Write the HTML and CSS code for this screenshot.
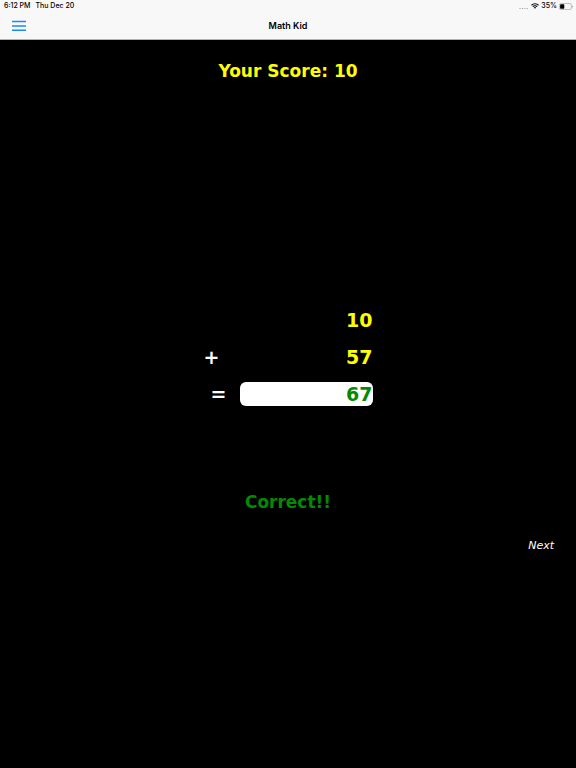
FILE: index.html
```html
<!DOCTYPE html>
<html lang="en">
<head>
<meta charset="utf-8">
<meta name="viewport" content="width=device-width, initial-scale=1">
<title>Math Kid</title>
<link rel="stylesheet" href="styles.css">
</head>
<body>
<header class="top">
  <div class="status">
    <span class="status-group"><span>6:12 PM</span><span>Thu Dec 20</span></span>
    <span class="status-group status-right">
      <svg class="dots" viewBox="0 0 9 3" aria-hidden="true"><g fill="#888"><circle cx="1" cy="1.5" r=".6"/><circle cx="3.4" cy="1.5" r=".6"/><circle cx="5.8" cy="1.5" r=".6"/><circle cx="8.2" cy="1.5" r=".6"/></g></svg>
      <svg class="wifi" viewBox="0 0 16 12" aria-hidden="true"><path d="M1 4.5a10 10 0 0 1 14 0M3.6 7.2a6.2 6.2 0 0 1 8.8 0" fill="none" stroke="#000" stroke-width="2.2"/><path d="M5.6 9.2a3.4 3.4 0 0 1 4.8 0L8 11.6z"/></svg>
      <span>35%</span>
      <svg class="battery" viewBox="0 0 28 14" aria-hidden="true"><rect x=".8" y="1" width="24" height="12" rx="3" fill="none" stroke="#999" stroke-width="1.2"/><rect x="2.2" y="2.4" width="8.4" height="9.2" rx="1.4"/><path d="M26 4.8q1.6 .6 1.6 2.2t-1.6 2.2z" fill="#999"/></svg>
    </span>
  </div>
  <nav class="bar">
    <button class="menu" type="button" aria-label="Menu"><svg viewBox="0 0 15 12" aria-hidden="true"><path d="M1 1.5h14M1 6h14M1 10.2h14" stroke="#1a88f5" stroke-width="1.4"/></svg></button>
    <h1 class="title">Math Kid</h1>
  </nav>
</header>
<main class="game">
  <p class="score">Your Score: 10</p>
  <form class="sum">
    <span class="number">10</span>
    <span class="sign plus">+</span><span class="number">57</span>
    <label class="sign" for="answer">=</label><input class="answer" id="answer" type="text" inputmode="numeric" value="67">
  </form>
  <p class="result">Correct!!</p>
  <button class="next" type="button">Next</button>
</main>
</body>
</html>
```
FILE: styles.css
```css
* { box-sizing: border-box; }
body {
  margin: 0;
  min-height: 100vh;
  background: #000;
  font-family: "DejaVu Sans", Verdana, sans-serif;
}
.top {
  background: #f8f8f8;
  color: #000;
  font-family: Inter, "Liberation Sans", sans-serif;
  border-bottom: 1px solid #b2b2b2;
}
.status {
  display: flex;
  justify-content: space-between;
  height: 12px;
  padding: 0 3px 0 4px;
  font-size: 7px;
  line-height: 12px;
  font-weight: 500;
}
.status-group { display: flex; gap: 5px; }
.status-right { align-items: center; gap: 2px; }
.dots { width: 9px; height: 3px; align-self: flex-end; margin: 0 1px 2px 0; }
.wifi { width: 8px; height: 6px; }
.battery { width: 14px; height: 7px; }
.bar {
  display: grid;
  grid-template-columns: 1fr auto 1fr;
  align-items: center;
  height: 27px;
  padding: 0 11px;
}
.menu {
  width: 15px;
  height: 12px;
  padding: 0;
  border: 0;
  background: none;
}
.menu svg { display: block; width: 15px; height: 12px; }
.title { margin: 0; font-size: 9px; line-height: 12px; font-weight: 600; }
.game {
  display: flex;
  flex-direction: column;
  align-items: center;
}
.score {
  margin: 20px 0 0;
  color: #ff0;
  font-size: 17px;
  line-height: 22px;
  font-weight: 700;
}
.sum {
  display: grid;
  grid-template-columns: 30px 133px;
  column-gap: 6px;
  row-gap: 13px;
  margin-top: 226px;
  font-size: 19px;
  line-height: 24px;
  font-weight: 700;
}
.number { grid-column: 2; color: #ff0; text-align: right; }
.sign { color: #fff; text-align: center; }
.plus { text-align: left; }
.answer {
  width: 100%;
  height: 24px;
  padding: 0;
  border: 0;
  border-radius: 6px;
  background: #fff;
  color: #008b00;
  font: inherit;
  text-align: right;
}
.result {
  margin: 85px 0 0;
  color: #008b00;
  font-size: 17px;
  line-height: 22px;
  font-weight: 700;
}
.next {
  align-self: flex-end;
  margin: 24px 22px 0 0;
  padding: 0;
  border: 0;
  background: none;
  color: #fff;
  font: italic 11px/18px "DejaVu Sans", Verdana, sans-serif;
}
```
